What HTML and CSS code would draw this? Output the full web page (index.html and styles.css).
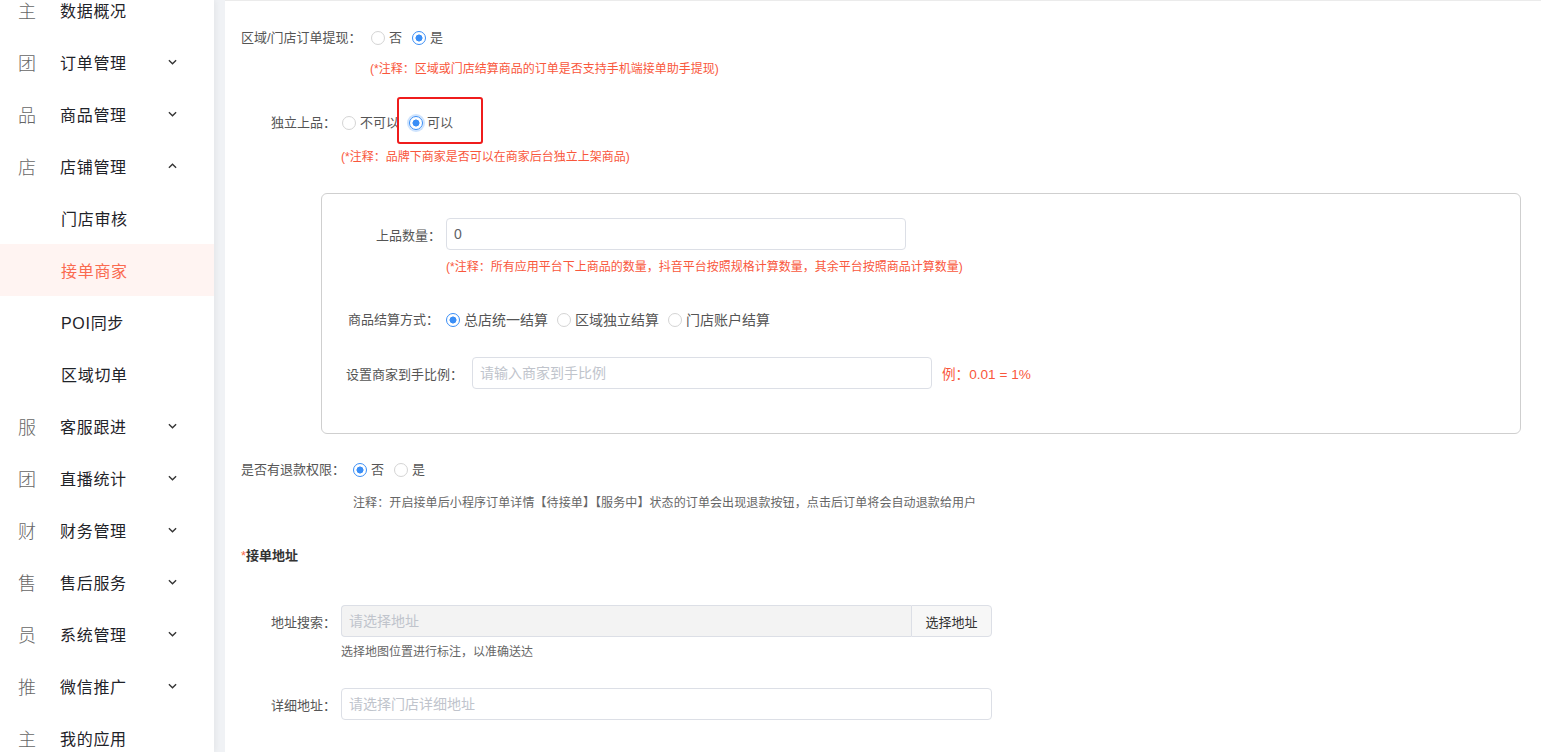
FILE: index.html
```html
<!DOCTYPE html>
<html lang="zh-CN">
<head>
<meta charset="utf-8">
<title>接单商家</title>
<link rel="stylesheet" href="styles.css">
</head>
<body>
<div class="app">
  <aside class="sidebar">
    <ul class="menu">
      <li class="mi"><span class="ic">主</span><span class="tx">数据概况</span></li>
      <li class="mi"><span class="ic">团</span><span class="tx">订单管理</span><svg class="chev" viewBox="0 0 10 6" width="10" height="6"><path d="M1 1l4 4 4-4" fill="none" stroke="#333" stroke-width="1.5"/></svg></li>
      <li class="mi"><span class="ic">品</span><span class="tx">商品管理</span><svg class="chev" viewBox="0 0 10 6" width="10" height="6"><path d="M1 1l4 4 4-4" fill="none" stroke="#333" stroke-width="1.5"/></svg></li>
      <li class="mi"><span class="ic">店</span><span class="tx">店铺管理</span><svg class="chev" viewBox="0 0 10 6" width="10" height="6"><path d="M1 5l4-4 4 4" fill="none" stroke="#333" stroke-width="1.5"/></svg></li>
      <li class="mi sub"><span class="tx">门店审核</span></li>
      <li class="mi sub active"><span class="tx">接单商家</span></li>
      <li class="mi sub"><span class="tx">POI同步</span></li>
      <li class="mi sub"><span class="tx">区域切单</span></li>
      <li class="mi"><span class="ic">服</span><span class="tx">客服跟进</span><svg class="chev" viewBox="0 0 10 6" width="10" height="6"><path d="M1 1l4 4 4-4" fill="none" stroke="#333" stroke-width="1.5"/></svg></li>
      <li class="mi"><span class="ic">团</span><span class="tx">直播统计</span><svg class="chev" viewBox="0 0 10 6" width="10" height="6"><path d="M1 1l4 4 4-4" fill="none" stroke="#333" stroke-width="1.5"/></svg></li>
      <li class="mi"><span class="ic">财</span><span class="tx">财务管理</span><svg class="chev" viewBox="0 0 10 6" width="10" height="6"><path d="M1 1l4 4 4-4" fill="none" stroke="#333" stroke-width="1.5"/></svg></li>
      <li class="mi"><span class="ic">售</span><span class="tx">售后服务</span><svg class="chev" viewBox="0 0 10 6" width="10" height="6"><path d="M1 1l4 4 4-4" fill="none" stroke="#333" stroke-width="1.5"/></svg></li>
      <li class="mi"><span class="ic">员</span><span class="tx">系统管理</span><svg class="chev" viewBox="0 0 10 6" width="10" height="6"><path d="M1 1l4 4 4-4" fill="none" stroke="#333" stroke-width="1.5"/></svg></li>
      <li class="mi"><span class="ic">推</span><span class="tx">微信推广</span><svg class="chev" viewBox="0 0 10 6" width="10" height="6"><path d="M1 1l4 4 4-4" fill="none" stroke="#333" stroke-width="1.5"/></svg></li>
      <li class="mi"><span class="ic">主</span><span class="tx">我的应用</span></li>
    </ul>
  </aside>

  <main class="main">
    <div class="row r1">
      <span class="lbl w130">区域/门店订单提现：</span>
      <span class="opt"><span class="radio"></span>否</span>
      <span class="opt"><span class="radio on"></span>是</span>
    </div>
    <div class="note red n1">(*注释：区域或门店结算商品的订单是否支持手机端接单助手提现)</div>

    <div class="row r2">
      <span class="lbl w71">独立上品：</span>
      <span class="opt"><span class="radio"></span>不可以</span>
      <span class="opt"><span class="radio on focus"></span>可以</span>
      <span class="highlight"></span>
    </div>
    <div class="note red n2">(*注释：品牌下商家是否可以在商家后台独立上架商品)</div>

    <section class="box">
      <div class="irow b1">
        <span class="lbl w70">上品数量：</span>
        <input class="inp w460" type="text" value="0">
      </div>
      <div class="note red n3">(*注释：所有应用平台下上商品的数量，抖音平台按照规格计算数量，其余平台按照商品计算数量)</div>
      <div class="row b2">
        <span class="lbl w98">商品结算方式：</span>
        <span class="opt big"><span class="radio on"></span>总店统一结算</span>
        <span class="opt big"><span class="radio"></span>区域独立结算</span>
        <span class="opt big"><span class="radio"></span>门店账户结算</span>
      </div>
      <div class="irow b3">
        <span class="lbl w126">设置商家到手比例：</span>
        <input class="inp w460" type="text" placeholder="请输入商家到手比例">
        <span class="example">例：0.01 = 1%</span>
      </div>
    </section>

    <div class="row r3">
      <span class="lbl w112">是否有退款权限：</span>
      <span class="opt"><span class="radio on"></span>否</span>
      <span class="opt"><span class="radio"></span>是</span>
    </div>
    <div class="note gray n4">注释：开启接单后小程序订单详情【待接单】【服务中】状态的订单会出现退款按钮，点击后订单将会自动退款给用户</div>

    <div class="title"><span class="star">*</span>接单地址</div>

    <div class="irow a1">
      <span class="lbl w70">地址搜索：</span>
      <div class="group">
        <input class="inp disabled w570" type="text" placeholder="请选择地址" disabled>
        <button class="btn" type="button">选择地址</button>
      </div>
    </div>
    <div class="note gray n5">选择地图位置进行标注，以准确送达</div>

    <div class="irow a2">
      <span class="lbl w70">详细地址：</span>
      <input class="inp w651" type="text" placeholder="请选择门店详细地址">
    </div>
  </main>
</div>
</body>
</html>
```

FILE: styles.css
```css
* { box-sizing: border-box; }
html, body {
  margin: 0;
  padding: 0;
  height: 752px;
  overflow: hidden;
}
body {
  background: #f0f2f5;
  font-family: "Liberation Sans", "Noto Sans CJK SC", sans-serif;
}
.app {
  display: flex;
  height: 752px;
}

/* Sidebar */
.sidebar {
  width: 214px;
  flex: none;
  background: #fff;
  overflow: hidden;
  box-shadow: 2px 0 6px rgba(0, 0, 0, 0.05);
  position: relative;
  z-index: 1;
}
.menu {
  list-style: none;
  margin: -16px 0 0 0;
  padding: 0;
}
.mi {
  display: flex;
  align-items: center;
  height: 52px;
  padding-left: 18px;
  color: #1f2329;
  font-size: 16px;
  letter-spacing: 0.7px;
}
.mi .ic {
  width: 42px;
  flex: none;
  font-size: 18px;
  color: #666;
  font-weight: 300;
  letter-spacing: 0;
  font-family: "Noto Sans CJK SC", sans-serif;
}
.mi .tx {
  width: 108px;
  flex: none;
}
.mi.sub {
  padding-left: 61px;
}
.mi.active {
  background: #fff4f2;
  color: #fa6a50;
}
.chev {
  display: block;
  width: 9px;
  height: 6px;
}

/* Main */
.main {
  flex: 1;
  margin-left: 11px;
  background: #fff;
  border-top: 1px solid #ebebeb;
  padding-left: 16px;
  font-size: 13px;
  color: #555;
}
.row {
  display: flex;
  align-items: center;
  height: 20px;
  line-height: 20px;
}
.irow {
  display: flex;
  align-items: center;
  height: 32px;
}
.lbl { flex: none; white-space: nowrap; }
.w130 { width: 130px; }
.w71 { width: 71px; }
.w70 { width: 70px; }
.w98 { width: 98px; }
.w126 { width: 126px; }
.w112 { width: 112px; }

.opt {
  display: flex;
  align-items: center;
  margin-right: 10px;
  color: #555;
}
.opt.big {
  font-size: 14px;
  margin-right: 9px;
}
.radio {
  width: 14px;
  height: 14px;
  border-radius: 50%;
  border: 1px solid #d4d4d4;
  background: #fff;
  margin-right: 4px;
  flex: none;
}
.radio.on {
  border: 1.5px solid #3a8ef6;
  background: radial-gradient(circle, #3a8ef6 0 3.2px, #fff 3.8px);
}
.radio.focus {
  box-shadow: 0 0 0 2px rgba(58, 142, 246, 0.25);
}

.note {
  line-height: 18px;
  height: 18px;
  font-size: 12px;
  white-space: nowrap;
}
.red { color: #f9573c; }
.gray { color: #666; }

.r1 { margin-top: 27px; }
.n1 { margin-top: 12px; margin-left: 129px; }
.r2 { margin-top: 35px; margin-left: 30px; position: relative; }
.n2 { margin-top: 15px; margin-left: 100px; }

.highlight {
  position: absolute;
  left: 126px;
  top: -16px;
  width: 86px;
  height: 47px;
  border: 2px solid #ef1c1c;
  border-radius: 3px;
}

.box {
  margin-top: 27px;
  margin-left: 80px;
  margin-right: 20px;
  border: 1px solid #cfcfcf;
  border-radius: 6px;
  padding: 24px 0 44px 0;
}
.b1 { margin-left: 54px; }
.n3 { margin-top: 8px; margin-left: 124px; }
.b2 { margin-top: 34px; margin-left: 26px; }
.b3 { margin-top: 27px; margin-left: 24px; }

.inp {
  height: 32px;
  border: 1px solid #dcdfe6;
  border-radius: 4px;
  padding: 0 7px;
  font-family: "Liberation Sans", "Noto Sans CJK SC", sans-serif;
  font-size: 14px;
  color: #606266;
  background: #fff;
  outline: none;
}
.inp::placeholder { color: #c0c4cc; }
.w460 { width: 460px; }
.w570 { width: 570px; }
.w651 { width: 651px; }

.example {
  margin-left: 10px;
  color: #f9573c;
  font-size: 13.6px;
}

.r3 { margin-top: 26px; }
.n4 { margin-top: 14px; margin-left: 112px; letter-spacing: 0.1px; }

.title {
  margin-top: 34px;
  height: 20px;
  line-height: 20px;
  font-weight: bold;
  color: #333;
}
.star { color: #f56c4c; font-weight: normal; }

.a1 { margin-top: 39px; margin-left: 30px; }
.n5 { margin-top: 6px; margin-left: 100px; }
.a2 { margin-top: 27px; margin-left: 30px; }

.group {
  display: flex;
  height: 32px;
}
.inp.disabled {
  background: #f3f3f3;
  border-radius: 4px 0 0 4px;
  border-right: none;
}
.btn {
  width: 81px;
  height: 32px;
  border: 1px solid #dcdfe6;
  border-radius: 0 4px 4px 0;
  background: #f7f7f7;
  color: #333;
  font-family: "Liberation Sans", "Noto Sans CJK SC", sans-serif;
  font-size: 13px;
  padding: 0;
}
```
